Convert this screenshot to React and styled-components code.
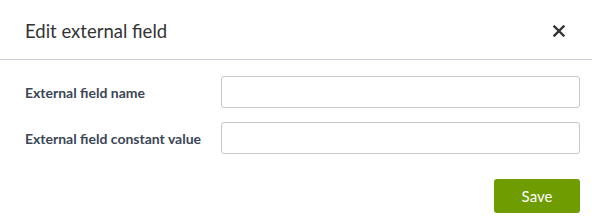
import React from 'react';
import styled, { createGlobalStyle } from 'styled-components';

const GlobalStyle = createGlobalStyle`
  body {
    margin: 0;
    background: #fff;
    font-family: Lato, "Open Sans", sans-serif;
  }
`

const Modal = styled.div`
  width: 592px;
  height: 220px;
  background: #fff;
  display: flex;
  flex-direction: column;
`

const ModalHeader = styled.div`
  height: 60px;
  box-sizing: border-box;
  border-bottom: 1px solid #cdcbd9;
  display: flex;
  align-items: center;
  justify-content: space-between;
  padding: 0 25px 0 25px;
`

const Title = styled.h3`
  margin: 0;
  font-size: 18.5px;
  font-weight: 400;
  color: #333;
  padding-top: 3px;
`

const CloseButton = styled.button`
  border: none;
  background: none;
  padding: 0;
  margin-right: 2px;
  margin-top: 3px;
  width: 12px;
  height: 12px;
  display: flex;
  cursor: pointer;
`

const ModalBody = styled.div`
  padding: 16px 12px 0 25px;
  display: flex;
  flex-direction: column;
  gap: 14px;
`

const FieldRow = styled.div`
  display: grid;
  grid-template-columns: 196px 1fr;
  align-items: center;
`

const Label = styled.label`
  font-size: 14px;
  font-weight: 700;
  color: #3b4656;
`

const Input = styled.input`
  height: 32px;
  box-sizing: border-box;
  border: 1px solid #c8c8c8;
  border-radius: 3px;
  font-family: inherit;
  font-size: 14px;
  padding: 0 8px;
  outline: none;
`

const ModalFooter = styled.div`
  display: flex;
  justify-content: flex-end;
  padding: 25px 12px 0 0;
`

const SaveButton = styled.button`
  width: 86px;
  height: 34px;
  border: none;
  border-radius: 3px;
  background: #6f9c00;
  color: #fff;
  font-family: inherit;
  font-size: 15px;
  cursor: pointer;
`

export default function App(){
  return (
    <>
      <GlobalStyle />
      <Modal>
        <ModalHeader>
          <Title>Edit external field</Title>
          <CloseButton aria-label="Close">
            <svg width="12" height="12" viewBox="0 0 12 12">
              <path d="M1.5 1.5 L10.5 10.5 M10.5 1.5 L1.5 10.5" stroke="#333" strokeWidth="2.4" strokeLinecap="square" />
            </svg>
          </CloseButton>
        </ModalHeader>
        <ModalBody>
          <FieldRow>
            <Label>External field name</Label>
            <Input />
          </FieldRow>
          <FieldRow>
            <Label>External field constant value</Label>
            <Input />
          </FieldRow>
        </ModalBody>
        <ModalFooter>
          <SaveButton>Save</SaveButton>
        </ModalFooter>
      </Modal>
    </>
  );
}
